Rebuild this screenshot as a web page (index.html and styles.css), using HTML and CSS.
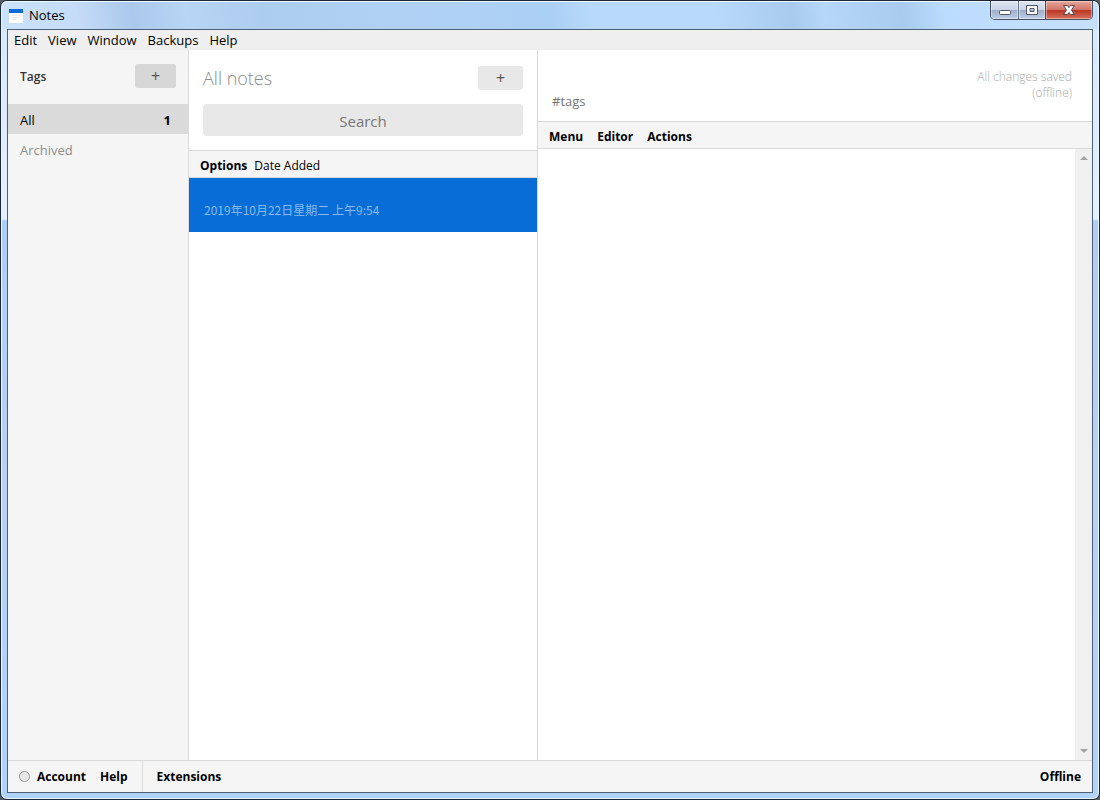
FILE: index.html
```html
<!DOCTYPE html>
<html lang="en">
<head>
    <meta charset="UTF-8">
    <meta name="viewport" content="width=device-width, initial-scale=1.0">
    <title>Notes</title>
    <link rel="stylesheet" href="styles.css">
</head>
<body>
    <div class="window">
        <header class="titlebar">
            <svg class="app-icon" width="14" height="14" viewBox="0 0 14 14" aria-hidden="true">
                <rect width="14" height="14" fill="#fdfdfd"/>
                <rect width="14" height="4" fill="#086dd6"/>
                <path d="M2 6.5h10M2 8.5h8M2 10.5h6" stroke="#ececec"/>
            </svg>
            <span class="app-title">Notes</span>
            <div class="window-controls">
                <button type="button" class="control minimize" aria-label="Minimize">
                    <svg width="14" height="12" viewBox="0 0 14 12"><rect x="1.500" y="6.500" width="11" height="4" rx="1" fill="#fff" stroke="#535666"/></svg>
                </button>
                <button type="button" class="control maximize" aria-label="Maximize">
                    <svg width="14" height="12" viewBox="0 0 14 12"><path fill-rule="evenodd" d="M1.5 1.5h11v9h-11zM5 4.500h4v3h-4z" fill="#fff" stroke="#535666"/></svg>
                </button>
                <button type="button" class="control close" aria-label="Close">
                    <svg width="14" height="12" viewBox="0 0 14 12"><path d="M1.500 1.500h4L7 3.500l1.500-2h4L9.500 6l3 4.500h-4L7 8.500l-1.500 2h-4L4.500 6z" fill="#fff" stroke="#5c4550"/></svg>
                </button>
            </div>
        </header>

        <div class="client">
            <nav class="menubar">
                <button type="button">Edit</button>
                <button type="button">View</button>
                <button type="button">Window</button>
                <button type="button">Backups</button>
                <button type="button">Help</button>
            </nav>

            <main class="columns">
                <!-- Tags -->
                <aside class="tags">
                    <div class="tags-header">
                        <h2>Tags</h2>
                        <button type="button" class="add-button add-tag" aria-label="Add tag">+</button>
                    </div>
                    <button type="button" class="tag selected"><span>All</span><span class="count">1</span></button>
                    <button type="button" class="tag archived">Archived</button>
                </aside>

                <!-- Notes list -->
                <section class="notes">
                    <div class="notes-header">
                        <div class="notes-title">
                            <h1>All notes</h1>
                            <button type="button" class="add-button add-note" aria-label="Add note">+</button>
                        </div>
                        <input type="text" class="search" placeholder="Search" aria-label="Search">
                    </div>
                    <div class="options-bar">
                        <button type="button">Options</button>
                        <span>Date Added</span>
                    </div>
                    <article class="note">
                        <time datetime="2019-10-22T09:54" lang="zh-CN">2019年10月22日星期二 上午9:54</time>
                    </article>
                </section>

                <!-- Editor -->
                <section class="editor">
                    <div class="editor-header">
                        <input type="text" class="tags-input" placeholder="#tags" aria-label="Tags">
                        <p class="save-status">All changes saved<br>(offline)</p>
                    </div>
                    <div class="toolbar">
                        <button type="button">Menu</button>
                        <button type="button">Editor</button>
                        <button type="button">Actions</button>
                    </div>
                    <div class="editor-body">
                        <textarea aria-label="Note text"></textarea>
                        <div class="scrollbar">
                            <button type="button" aria-label="Scroll up"><svg width="8" height="4" viewBox="0 0 8 4"><path d="M0 4l4-4 4 4z" fill="#a3a3a3"/></svg></button>
                            <button type="button" aria-label="Scroll down"><svg width="8" height="4" viewBox="0 0 8 4"><path d="M0 0l4 4 4-4z" fill="#a3a3a3"/></svg></button>
                        </div>
                    </div>
                </section>
            </main>

            <footer class="footer">
                <div class="footer-left">
                    <span class="status-dot"></span>
                    <button type="button">Account</button>
                    <button type="button">Help</button>
                </div>
                <button type="button" class="extensions">Extensions</button>
                <button type="button" class="offline">Offline</button>
            </footer>
        </div>
    </div>
</body>
</html>
```
FILE: styles.css
```css
* {
    box-sizing: border-box;
}

body {
    margin: 0;
    height: 100vh;
    background-color: #555c68;
    font-family: "Open Sans", "Noto Sans", "Noto Sans CJK SC", sans-serif;
    font-size: 12px;
    color: #000;
}

button {
    padding: 0;
    border: none;
    background: none;
    font: inherit;
    color: inherit;
}

input, textarea {
    border: none;
    outline: none;
    font: inherit;
}

h1, h2, p {
    margin: 0;
}

.window {
    display: flex;
    flex-direction: column;
    height: 100%;
    padding: 0 6px 6px;
    border: 1px solid #1c2738;
    border-radius: 7px;
    background: linear-gradient(#d5e7fb, #e4f1ff 218px, #afcef5 220px, #b9d1f5 60%, #b0d2fb);
    box-shadow: inset 0 0 0 1px #eaf4ff;
}

/* Title bar */
.titlebar {
    display: flex;
    align-items: center;
    height: 28px;
    margin: 0 -5px;
    padding: 0 0 2px 7px;
    flex-shrink: 0;
    border-top: 1px solid #eef6ff;
    border-radius: 6px 6px 0 0;
    background: linear-gradient(80deg, #cbe2fb 0, #c5dcf8 7%, #aac9ec 12%, #b7d5f4 17%, #adcdef 24%, #b0d1f4 36%, #abd0f5 50%, #b8d9fb 54%, #b8d9fb 65%, #a8cbee 72%, #b6d7fa 75%, #a8cbee 82%, #bcdcfd 86%, #c6e0fc 100%);
}

.app-icon {
    margin: 2px 6px 0 0;
}

.app-title {
    flex: 1;
    font-size: 13px;
}

.window-controls {
    display: flex;
    align-self: flex-start;
    margin: -1px 5px 0 0;
    height: 19px;
    border: 1px solid #465365;
    border-top: none;
    border-radius: 0 0 5px 5px;
    overflow: hidden;
}

.control {
    display: flex;
    align-items: center;
    justify-content: center;
    width: 27px;
    background: linear-gradient(#e0e7f2, #c8d3e4 48%, #9eadc5 50%, #bdcee6);
    box-shadow: inset 0 0 0 1px rgba(255, 255, 255, 0.4);
}

.maximize {
    border-left: 1px solid #69778d;
}

.close {
    width: 47px;
    border-left: 1px solid #693c42;
    background: linear-gradient(#e7a79b, #d27568 48%, #b93422 50%, #d7705b);
}

.client {
    display: flex;
    flex-direction: column;
    flex: 1;
    min-height: 0;
    border: 1px solid #4d6075;
    background-color: #fff;
}

/* Menu bar */
.menubar {
    display: flex;
    gap: 11px;
    height: 20px;
    padding: 0 6px;
    flex-shrink: 0;
    background-color: #efefef;
    font-size: 13px;
}

.columns {
    display: flex;
    flex: 1;
    min-height: 0;
}

.add-button {
    height: 24px;
    border-radius: 3px;
    font-size: 16px;
    line-height: 24px;
    color: #555;
}

/* Tags */
.tags {
    width: 181px;
    flex-shrink: 0;
    border-right: 1px solid #dcdcdc;
    background-color: #f5f5f5;
}

.tags-header {
    display: flex;
    align-items: center;
    justify-content: space-between;
    height: 54px;
    padding: 0 12px 2px;
}

.tags-header h2 {
    font-size: 12px;
    font-weight: 600;
    color: #333;
}

.add-tag {
    width: 41px;
    background-color: #d7d7d7;
}

.tag {
    display: flex;
    align-items: center;
    justify-content: space-between;
    width: 100%;
    height: 30px;
    padding: 2px 17px 0 12px;
    font-size: 13px;
    font-weight: 500;
}

.tag.selected {
    background-color: #dadada;
}

.tag .count {
    font-weight: 700;
}

.tag.archived {
    color: #8f8f8f;
}

/* Notes list */
.notes {
    width: 349px;
    flex-shrink: 0;
    border-right: 1px solid #d9d9d9;
}

.notes-header {
    height: 100px;
    padding: 16px 14px 0;
}

.notes-title {
    display: flex;
    align-items: center;
    justify-content: space-between;
    height: 24px;
    margin-bottom: 14px;
}

.notes-title h1 {
    font-size: 18px;
    font-weight: 300;
    color: #8a8a8a;
}

.add-note {
    width: 45px;
    background-color: #e8e8e8;
}

.search {
    width: 100%;
    height: 32px;
    padding: 2px 8px 0;
    border-radius: 4px;
    background-color: #e8e8e8;
    font-size: 15px;
    text-align: center;
}

.search::placeholder {
    color: #777;
    opacity: 1;
}

.options-bar {
    display: flex;
    align-items: center;
    gap: 7px;
    height: 28px;
    padding: 2px 11px 0;
    border-top: 1px solid #d9d9d9;
    border-bottom: 1px solid #d9d9d9;
    background-color: #f5f5f5;
}

.options-bar button, .toolbar button, .footer button {
    font-weight: 700;
}

.note {
    height: 54px;
    padding: 22px 15px 0;
    background-color: #086dd6;
    font-family: "Noto Sans CJK SC", sans-serif;
    line-height: 20px;
    color: #84bbf2;
}

/* Editor */
.editor {
    display: flex;
    flex-direction: column;
    flex: 1;
    min-width: 0;
}

.editor-header {
    display: flex;
    align-items: flex-end;
    justify-content: space-between;
    height: 71px;
    padding: 0 20px 9px 14px;
    flex-shrink: 0;
}

.tags-input {
    width: 200px;
    height: 22px;
    padding: 0;
    font-size: 13px;
}

.tags-input::placeholder {
    color: #757575;
    opacity: 1;
}

.save-status {
    align-self: flex-start;
    padding-top: 19px;
    font-weight: 300;
    line-height: 16px;
    text-align: right;
    color: #aaa;
}

.toolbar {
    display: flex;
    align-items: center;
    gap: 14px;
    height: 28px;
    padding: 2px 11px 0;
    flex-shrink: 0;
    border-top: 1px solid #d9d9d9;
    border-bottom: 1px solid #d9d9d9;
    background-color: #f5f5f5;
}

.editor-body {
    display: flex;
    flex: 1;
    min-height: 0;
}

.editor-body textarea {
    flex: 1;
    padding: 14px;
    resize: none;
}

.scrollbar {
    display: flex;
    flex-direction: column;
    justify-content: space-between;
    width: 17px;
    background-color: #f0f0f0;
}

.scrollbar button {
    display: flex;
    align-items: center;
    justify-content: center;
    height: 18px;
}

/* Footer */
.footer {
    display: flex;
    align-items: stretch;
    height: 32px;
    padding-right: 11px;
    flex-shrink: 0;
    border-top: 1px solid #d9d9d9;
    background-color: #f5f5f5;
}

.footer-left {
    display: flex;
    align-items: center;
    gap: 14px;
    padding: 0 14px 0 11px;
    border-right: 1px solid #dcdcdc;
}

.status-dot {
    width: 11px;
    height: 11px;
    margin-right: -7px;
    border: 1px solid #999;
    border-radius: 50%;
    background-color: #e8e8e8;
}

.extensions {
    margin-left: 14px;
}

.offline {
    margin-left: auto;
}
```
